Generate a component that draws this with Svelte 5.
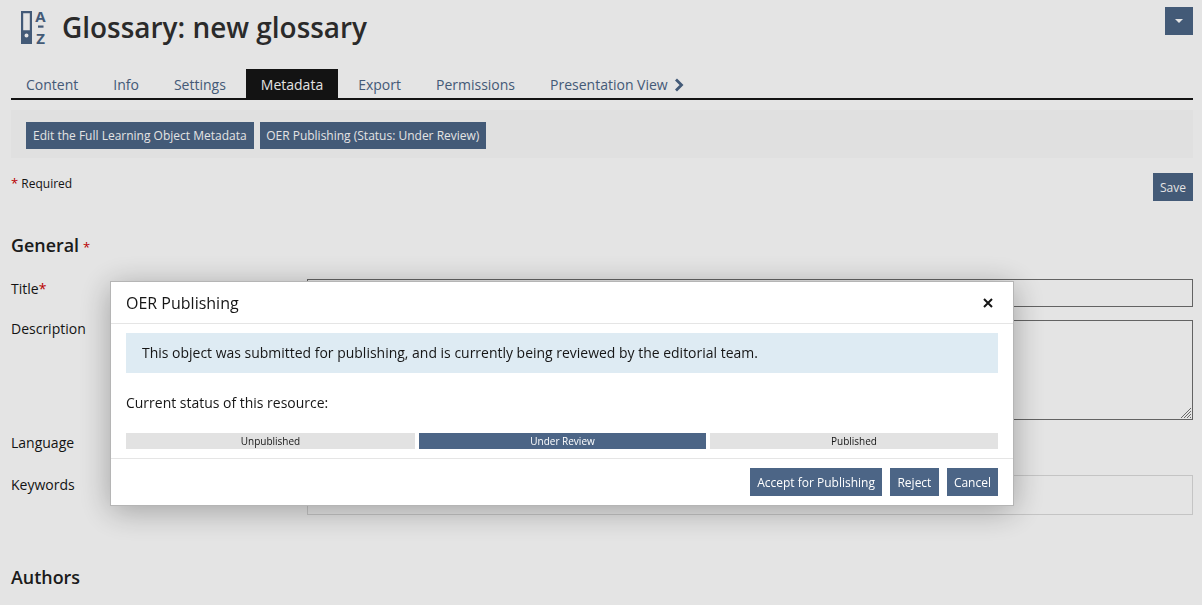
<script>
  const tabs = ['Content', 'Info', 'Settings', 'Metadata', 'Export', 'Permissions', 'Presentation View'];
  const steps = [
    { label: 'Unpublished', active: false },
    { label: 'Under Review', active: true },
    { label: 'Published', active: false }
  ];
</script>

<div class="page">
  <header class="head">
    <svg class="obj-icon" width="26" height="45" viewBox="0 -7 26 45" aria-hidden="true">
      <path fill="#4c6586" fill-rule="evenodd" d="M0 0h11v33H0zM2.200 2.200v17h6.600v-17zM5.500 22.500a2 2 0 1 0 0 4a2 2 0 1 0 0-4z"/>
      <text x="19.500" y="11" class="az">A</text>
      <rect x="17" y="14.500" width="5.500" height="2.200" fill="#4c6586"/>
      <text x="19.500" y="32.500" class="az">Z</text>
    </svg>
    <h1>Glossary: new glossary</h1>
    <button class="btn menu-btn" aria-label="Actions"><span class="caret"></span></button>
  </header>

  <nav class="tabs">
    {#each tabs as tab}
      <span class="tab" class:active={tab === 'Metadata'}>
        {tab}
        {#if tab === 'Presentation View'}
          <svg width="10" height="14" viewBox="0 0 10 14" aria-hidden="true"><path d="M2 1.500 7.500 7 2 12.500" fill="none" stroke="#4c6586" stroke-width="2.800"/></svg>
        {/if}
      </span>
    {/each}
  </nav>

  <div class="toolbar">
    <button class="btn">Edit the Full Learning Object Metadata</button>
    <button class="btn narrow">OER Publishing (Status: Under Review)</button>
  </div>

  <div class="req-row">
    <span class="required"><span class="star">*</span> Required</span>
    <button class="btn tall">Save</button>
  </div>

  <h2 class="general">General<span class="star small">*</span></h2>

  <div class="form-row title-row">
    <span class="label wide">Title<span class="star">*</span></span>
    <div class="field dark" style="height: 28px"></div>
  </div>
  <div class="form-row desc-row">
    <span class="label">Description</span>
    <div class="field dark area" style="height: 100px">
      <svg class="grip" width="12" height="12" viewBox="0 0 12 12" aria-hidden="true">
        <path d="M11 1 1 11M11 4 4 11M11 7 7 11M11 10 10 11" stroke="#777" stroke-width="1"/>
      </svg>
    </div>
  </div>
  <div class="form-row lang-row">
    <span class="label wide">Language</span>
  </div>
  <div class="form-row keys-row">
    <span class="label wide">Keywords</span>
    <div class="field light" style="height: 40px"></div>
  </div>

  <h2 class="authors">Authors</h2>
</div>

<div class="backdrop"></div>

<div class="modal" role="dialog" aria-label="OER Publishing">
  <div class="modal-head">
    <span class="modal-title">OER Publishing</span>
    <svg class="close" width="10" height="10" viewBox="0 0 10 10" aria-label="Close">
      <path d="M1 1 9 9M9 1 1 9" stroke="#161616" stroke-width="2"/>
    </svg>
  </div>
  <div class="modal-body">
    <div class="info">This object was submitted for publishing, and is currently being reviewed by the editorial team.</div>
    <p class="status">Current status of this resource:</p>
    <div class="steps">
      {#each steps as step}
        <div class="step" class:on={step.active}>{step.label}</div>
      {/each}
    </div>
  </div>
  <div class="modal-foot">
    <button class="btn tall">Accept for Publishing</button>
    <button class="btn tall reject">Reject</button>
    <button class="btn tall">Cancel</button>
  </div>
</div>

<style>
  :global(body) {
    margin: 0;
    background: #fff;
    font-family: "Open Sans", sans-serif;
    color: #161616;
    overflow: hidden;
  }

  .page {
    height: 605px;
    box-sizing: border-box;
    padding: 0 9px 0 11px;
    overflow: hidden;
  }

  .btn {
    font-family: inherit;
    font-size: 12px;
    line-height: 16px;
    color: #fff;
    background: #4c6586;
    border: none;
    border-radius: 0;
    padding: 0 7px;
    height: 27px;
    white-space: nowrap;
  }
  .btn.narrow {
    padding: 0 6.500px;
  }
  .btn.tall {
    height: 28px;
    padding-top: 1px;
  }
  .btn.reject {
    padding-left: 7.500px;
    padding-right: 7.500px;
  }

  .head {
    display: flex;
    align-items: flex-start;
    height: 69px;
    padding-left: 10px;
  }
  .obj-icon {
    margin-top: 4px;
    flex: none;
  }
  .az {
    font-family: "Open Sans", sans-serif;
    font-size: 15px;
    font-weight: 700;
    fill: #4c6586;
    text-anchor: middle;
  }
  h1 {
    margin: 8px 0 0 15px;
    font-size: 27.950px;
    line-height: 39px;
    font-weight: 600;
    color: #303030;
    flex: 1;
  }
  .menu-btn {
    width: 28px;
    height: 28px;
    margin-top: 7px;
    padding: 0;
    display: flex;
    align-items: center;
    justify-content: center;
  }
  .caret {
    border-top: 4px solid #fff;
    border-left: 4px solid transparent;
    border-right: 4px solid transparent;
  }

  .tabs {
    display: flex;
    height: 29px;
    border-bottom: 2px solid #161616;
  }
  .tab {
    font-size: 14px;
    line-height: 32px;
    padding: 2px 15px 0;
    margin-right: 5px;
    color: #4c6586;
    display: flex;
    align-items: center;
    gap: 6px;
    white-space: nowrap;
  }
  .tab.active {
    background: #161616;
    color: #fff;
  }

  .toolbar {
    margin-top: 10px;
    height: 48px;
    box-sizing: border-box;
    padding: 12px 15px 0;
    background: #fbfbfb;
    display: flex;
    gap: 6px;
  }

  .req-row {
    display: flex;
    justify-content: space-between;
    align-items: flex-start;
    margin-top: 15px;
    height: 28px;
  }
  .required {
    font-size: 12px;
    line-height: 22px;
  }
  .required .star {
    font-size: 13px;
    line-height: 0;
  }
  .star {
    color: #d00000;
  }

  h2 {
    margin: 0;
    font-size: 17.900px;
    line-height: 24px;
    font-weight: 600;
    color: #202020;
  }
  .general {
    margin-top: 32px;
  }
  .star.small {
    font-size: 13px;
    font-weight: 400;
    margin-left: 4px;
  }

  .form-row {
    display: flex;
    font-size: 14px;
  }
  .label {
    width: 296px;
    flex: none;
    line-height: 18px;
  }
  .label.wide {
    line-height: 20px;
  }
  .field {
    flex: 1;
    box-sizing: border-box;
    position: relative;
  }
  .dark {
    border: 1px solid #6f6f6f;
  }
  .light {
    border: 1px solid #dcdcdc;
  }
  .grip {
    position: absolute;
    right: 0;
    bottom: 0;
  }
  .title-row {
    margin-top: 20px;
  }
  .desc-row {
    margin-top: 13px;
  }
  .lang-row {
    margin-top: 13px;
    height: 42px;
  }
  .keys-row {
    margin-top: 0;
  }
  .authors {
    margin-top: 50px;
  }

  .backdrop {
    position: fixed;
    inset: 0;
    background: rgba(0, 0, 0, 0.105);
  }

  .modal {
    position: fixed;
    left: 110px;
    top: 281px;
    width: 904px;
    height: 225px;
    box-sizing: border-box;
    background: #fff;
    border: 1px solid #b5b5b5;
    box-shadow: 0 5px 30px rgba(0, 0, 0, 0.3);
    display: flex;
    flex-direction: column;
  }
  .modal-head {
    height: 42px;
    flex: none;
    box-sizing: border-box;
    border-bottom: 1px solid #e5e5e5;
    padding: 0 20px 0 15px;
    display: flex;
    align-items: center;
    justify-content: space-between;
  }
  .modal-title {
    font-size: 16px;
  }
  .modal-body {
    height: 135px;
    flex: none;
    box-sizing: border-box;
    border-bottom: 1px solid #e5e5e5;
    padding: 9px 15px 0;
  }
  .info {
    background: #deebf3;
    height: 40px;
    box-sizing: border-box;
    padding: 0 16px;
    font-size: 13.980px;
    line-height: 40px;
  }
  .status {
    margin: 20px 0 0;
    font-size: 13.980px;
    line-height: 20px;
  }
  .steps {
    display: grid;
    grid-template-columns: 289px 287px 288px;
    gap: 4px;
    margin-top: 20px;
  }
  .step {
    height: 16px;
    background: #e2e2e2;
    font-size: 10px;
    line-height: 16px;
    text-align: center;
    color: #161616;
  }
  .step.on {
    background: #4c6586;
    color: #fff;
  }
  .modal-foot {
    flex: 1;
    display: flex;
    justify-content: flex-end;
    gap: 8px;
    padding: 9px 15px 0;
  }
</style>
